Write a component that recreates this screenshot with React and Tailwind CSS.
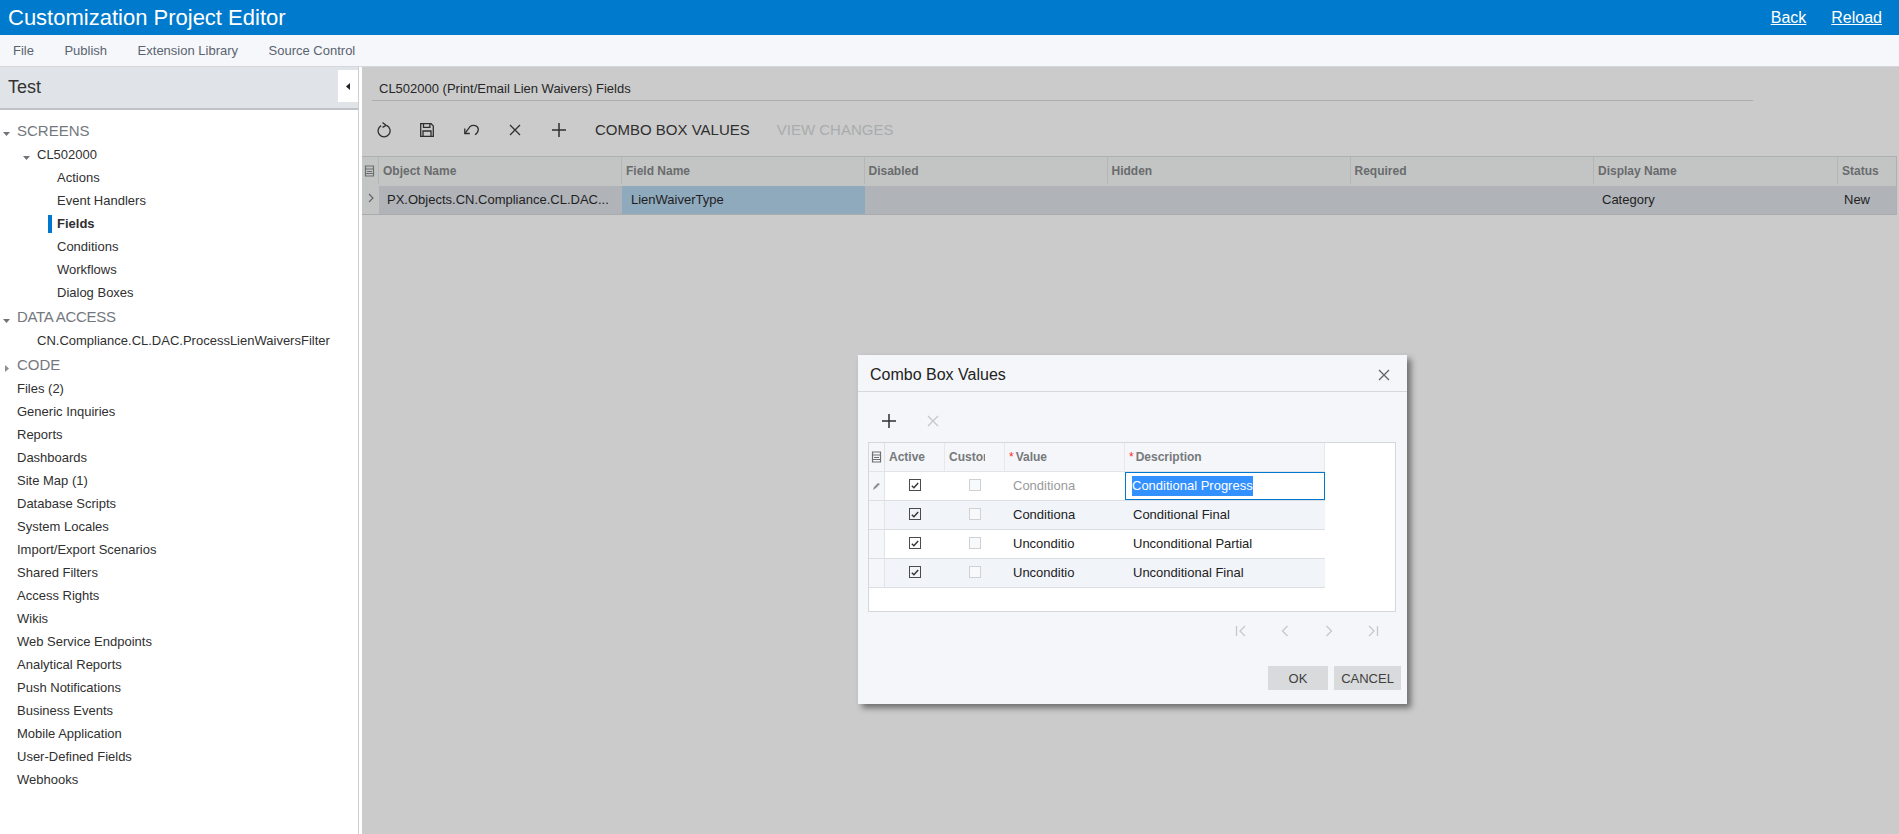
const menu = ["File", "Publish", "Extension Library", "Source Control"];
const screenItems = ["Actions", "Event Handlers", "Fields", "Conditions", "Workflows", "Dialog Boxes"];
const otherItems = [
  "Files (2)", "Generic Inquiries", "Reports", "Dashboards", "Site Map (1)", "Database Scripts",
  "System Locales", "Import/Export Scenarios", "Shared Filters", "Access Rights", "Wikis",
  "Web Service Endpoints", "Analytical Reports", "Push Notifications", "Business Events",
  "Mobile Application", "User-Defined Fields", "Webhooks",
];
const columns = ["Disabled", "Hidden", "Required"];
const comboRows = [
  { value: "Conditiona", text: "Conditional Progress", editing: true },
  { value: "Conditiona", text: "Conditional Final", alt: true },
  { value: "Unconditio", text: "Unconditional Partial" },
  { value: "Unconditio", text: "Unconditional Final", alt: true },
];

function CaretDown() {
  return (
    <svg width="7" height="4" viewBox="0 0 7 4" className="translate-y-[3px] shrink-0">
      <path d="M0 0h7L3.5 4z" fill="#6f747a" />
    </svg>
  );
}

function CaretRight() {
  return (
    <svg width="4" height="7" viewBox="0 0 4 7" className="translate-y-[3px] shrink-0">
      <path d="M0 0l4 3.5L0 7z" fill="#8a8f95" />
    </svg>
  );
}

function ColumnsIcon() {
  return (
    <svg width="11" height="12" viewBox="0 0 11 12" fill="none" stroke="#6c6e70" strokeWidth="1.2">
      <path d="M1.5 1h8v10h-8z" />
      <path d="M1.5 4h8M3 6.5h5M1.5 8.5h8" />
    </svg>
  );
}

function XIcon({ size = 12, color = "#2f2f2f" }) {
  return (
    <svg width={size} height={size} viewBox="0 0 12 12" fill="none" stroke={color} strokeWidth="1.3">
      <path d="M1 1l10 10M11 1L1 11" />
    </svg>
  );
}

function PlusIcon({ color = "#2f2f2f" }) {
  return (
    <svg width="14" height="14" viewBox="0 0 14 14" fill="none" stroke={color} strokeWidth="1.5">
      <path d="M7 0v14M0 7h14" />
    </svg>
  );
}

function Check({ on }) {
  return (
    <div className={`w-[12px] h-[12px] border flex items-center justify-center ${on ? "border-[#4a4a4a]" : "border-[#cfd1d4] bg-[#f8f9fb]"}`}>
      {on && (
        <svg width="8" height="7" viewBox="0 0 8 7" fill="none" stroke="#333" strokeWidth="1.4">
          <path d="M0.8 3.8l2.1 2L7.2 1" />
        </svg>
      )}
    </div>
  );
}

function PagerIcon({ d }) {
  return (
    <div className="w-[44px] flex justify-center">
      <svg width="12" height="12" viewBox="0 0 12 12" fill="none" stroke="#c6c8cb" strokeWidth="1.3">
        <path d={d} />
      </svg>
    </div>
  );
}

function Sidebar() {
  return (
    <aside className="w-[362px] shrink-0 bg-white">
      <div className="w-[358.5px] h-full border-r border-[#cfcfcf]">
        <div className="h-[43px] bg-[#e0e3e8] border-b-2 border-[#bfc2c6] flex items-center justify-between pl-[8px]">
          <span className="text-[18px] text-[#333333]">Test</span>
          <div className="w-[20px] h-[32px] bg-white flex items-center justify-center -mt-[3px]">
            <svg width="4" height="7" viewBox="0 0 4 7"><path d="M4 0L0 3.5 4 7z" fill="#222" /></svg>
          </div>
        </div>
        <div className="pt-[9px] text-[13px] text-[#303030]">
          <div className="h-[24px] flex items-center pl-[3px] gap-[7px] text-[15px] text-[#74787e]">
            <CaretDown />
            <span>SCREENS</span>
          </div>
          <div className="h-[23px] flex items-center pl-[23px] gap-[7px]">
            <CaretDown />
            <span>CL502000</span>
          </div>
          {screenItems.map((item) => (
            <div key={item} className="h-[23px] flex items-center pl-[48px]">
              <div className={`w-[4px] h-[18px] mr-[5px] ${item === "Fields" ? "bg-[#0078cf]" : ""}`} />
              <span className={item === "Fields" ? "font-bold" : ""}>{item}</span>
            </div>
          ))}
          <div className="h-[25px] pt-[2px] flex items-center pl-[3px] gap-[7px] text-[15px] text-[#74787e]">
            <CaretDown />
            <span className="tracking-[-0.3px]">DATA ACCESS</span>
          </div>
          <div className="h-[23px] flex items-center pl-[37px]">CN.Compliance.CL.DAC.ProcessLienWaiversFilter</div>
          <div className="h-[25px] pt-[2px] flex items-center pl-[5px] gap-[8px] text-[15px] text-[#74787e]">
            <CaretRight />
            <span>CODE</span>
          </div>
          {otherItems.map((item) => (
            <div key={item} className="h-[23px] flex items-center pl-[17px]">{item}</div>
          ))}
        </div>
      </div>
    </aside>
  );
}

function Toolbar() {
  return (
    <div className="h-[55px] pt-[3px] flex items-center text-[#2f2f2f]">
      <div className="w-[43px] flex justify-center">
        <svg width="14" height="16" viewBox="0 0 14 16" fill="none" stroke="#2f2f2f" strokeWidth="1.3">
          <path d="M4.2 3.6a6 6 0 1 0 5.4-.2" />
          <path d="M5.5 0.5l3.6 2.9-3.6 2" />
        </svg>
      </div>
      <div className="w-[44px] flex justify-center">
        <svg width="14" height="14" viewBox="0 0 14 14" fill="none" stroke="#2f2f2f" strokeWidth="1.3">
          <path d="M0.7 0.7h10.4l2.2 2.2v10.4H0.7z" />
          <path d="M3.5 0.7v3.6h6.4V0.7M3 13.3V8h8v5.3" />
        </svg>
      </div>
      <div className="w-[44px] flex justify-center">
        <svg width="15" height="12" viewBox="0 0 15 12" fill="none" stroke="#2f2f2f" strokeWidth="1.3">
          <path d="M0.8 4.5v5h5" />
          <path d="M1 9.3L6 2.6C9 0.2 14.4 1.2 14.3 5.6 14.2 7.9 13 9.7 11 10.8" />
        </svg>
      </div>
      <div className="w-[44px] flex justify-center"><XIcon /></div>
      <div className="w-[44px] flex justify-center"><PlusIcon /></div>
      <span className="ml-[14px] text-[15px]">COMBO BOX VALUES</span>
      <span className="ml-[27px] text-[15px] text-[#a9abad]">VIEW CHANGES</span>
    </div>
  );
}

function FieldsGrid() {
  return (
    <div className="w-[1535px] border-t border-r border-[#adafb0]">
      <div className="h-[29px] pb-[2px] flex bg-[#c3c5c4] text-[12px] font-bold text-[#696b6d]">
        <div className="w-[17px] flex items-center pl-[2px] border-r border-[#b4b6b7]"><ColumnsIcon /></div>
        <div className="w-[243px] flex items-center pl-[4px] border-r border-[#b4b6b7]">Object Name</div>
        <div className="w-[243px] flex items-center pl-[4px] border-r border-[#b4b6b7]">Field Name</div>
        {columns.map((c) => (
          <div key={c} className="w-[243px] flex items-center pl-[3.5px] border-r border-[#b4b6b7]">{c}</div>
        ))}
        <div className="w-[244px] flex items-center pl-[4px] border-r border-[#b4b6b7]">Display Name</div>
        <div className="flex-1 flex items-center pl-[4px]">Status</div>
      </div>
      <div className="h-[29px] flex bg-[#b0b3b8] border-b border-[#a9abad] text-[13px] text-[#1f1f1f]">
        <div className="w-[17px] flex items-center justify-center bg-[#c3c5c4]">
          <svg width="6" height="10" viewBox="0 0 6 10" fill="none" stroke="#62666b" strokeWidth="1.2" className="-translate-y-[2px]"><path d="M1 1l4 4-4 4" /></svg>
        </div>
        <div className="w-[243px] flex items-center pl-[8px]">PX.Objects.CN.Compliance.CL.DAC...</div>
        <div className="w-[243px] flex items-center pl-[9px] bg-[#8fa9bd]">LienWaiverType</div>
        <div className="w-[729px]" />
        <div className="w-[244px] flex items-center pl-[8px]">Category</div>
        <div className="flex-1 flex items-center pl-[6px]">New</div>
      </div>
    </div>
  );
}

function ComboDialog() {
  return (
    <div className="absolute left-[858px] top-[355px] w-[549px] h-[349px] bg-[#f4f6f9] shadow-[4px_4px_6px_rgba(0,0,0,0.45)] text-[#222222]">
      <div className="h-[37px] pt-[3px] px-[12px] flex items-center justify-between border-b border-[#d5d7da]">
        <span className="text-[16px]">Combo Box Values</span>
        <div className="mr-[5px]"><XIcon color="#5f6266" /></div>
      </div>
      <div className="h-[50px] flex items-center pl-[24px] gap-[31px] pt-[8px]">
        <PlusIcon />
        <XIcon color="#c4c6c9" />
      </div>
      <div className="ml-[10px] w-[528px] h-[170px] bg-white border border-[#d5d7da]">
        <div className="h-[29px] w-[456px] flex bg-[#f4f6f9] border-b border-[#e2e4e7] text-[12px] font-bold text-[#77797c]">
          <div className="w-[16px] flex items-center justify-center border-r border-[#dfe1e4]"><ColumnsIcon /></div>
          <div className="w-[60px] flex items-center pl-[4px] border-r border-[#e6e8eb]">Active</div>
          <div className="w-[60px] flex items-center pl-[4px] border-r border-[#e6e8eb]">
            <span className="w-[36px] overflow-hidden whitespace-nowrap">Custom</span>
          </div>
          <div className="w-[120px] flex items-center pl-[4px] border-r border-[#e6e8eb]"><span className="text-[#ff2a2a] mr-[2px] font-normal">*</span>Value</div>
          <div className="w-[200px] flex items-center pl-[4px] border-r border-[#e6e8eb]"><span className="text-[#ff2a2a] mr-[2px] font-normal">*</span>Description</div>
        </div>
        {comboRows.map((row) => (
          <div key={row.text} className={`h-[29px] w-[456px] flex border-b border-[#dcdee1] text-[13px] ${row.alt ? "bg-[#f1f4f9]" : "bg-white"}`}>
            <div className="w-[16px] flex items-center justify-center bg-[#f4f6f9] border-r border-[#e2e4e7]">
              {row.editing && (
                <svg width="8" height="8" viewBox="0 0 8 8"><path d="M0 8l1-3L5 1l2 1-4 4z" fill="#8b8d90" /></svg>
              )}
            </div>
            <div className="w-[60px] flex items-center justify-center -translate-y-[1px]"><Check on /></div>
            <div className="w-[60px] flex items-center justify-center -translate-y-[1px]"><Check /></div>
            <div className={`w-[120px] flex items-center pl-[8px] ${row.editing ? "text-[#9a9a9a]" : ""}`}>{row.value}</div>
            {row.editing ? (
              <div className="w-[200px] border-[1.5px] border-[#0078cf] bg-white flex items-center pl-[6px]">
                <span className="bg-[#3390ff] text-white">{row.text}</span>
              </div>
            ) : (
              <div className="w-[200px] flex items-center pl-[8px]">{row.text}</div>
            )}
          </div>
        ))}
      </div>
      <div className="h-[38px] flex items-center justify-end pr-[12px]">
        <PagerIcon d="M1.5 1v10M10 1L5 6l5 5" />
        <PagerIcon d="M8.5 1L3.5 6l5 5" />
        <PagerIcon d="M3.5 1l5 5-5 5" />
        <PagerIcon d="M2 1l5 5-5 5M10.5 1v10" />
      </div>
      <div className="mt-[16px] flex justify-end gap-[6px] pr-[6px] text-[13px] text-[#3f3f3f]">
        <div className="w-[60px] h-[24px] pt-[2px] bg-[#d9dadc] flex items-center justify-center">OK</div>
        <div className="w-[67px] h-[24px] pt-[2px] bg-[#d9dadc] flex items-center justify-center">CANCEL</div>
      </div>
    </div>
  );
}

export default function App() {
  return (
    <div className="relative w-[1899px] h-[834px] overflow-hidden flex flex-col font-['Liberation_Sans',Arial,sans-serif] text-[13px]">
      <header className="h-[35px] shrink-0 bg-[#007acc] text-white flex items-center justify-between pl-[8px] pr-[17px]">
        <span className="text-[22px]">Customization Project Editor</span>
        <div className="flex gap-[25px] text-[16px] underline">
          <span>Back</span>
          <span>Reload</span>
        </div>
      </header>
      <nav className="h-[32px] shrink-0 bg-[#f5f7fa] border-b border-[#d5d7da] flex items-center gap-[30.5px] pl-[13px] text-[13px] text-[#5b6370]">
        {menu.map((m) => (
          <span key={m}>{m}</span>
        ))}
      </nav>
      <div className="flex-1 flex min-h-0">
        <Sidebar />
        <main className="flex-1 bg-[#cbcbcb] text-[#262626]">
          <div className="ml-[10px] w-[1381px] h-[34px] pl-[7px] pb-[2px] flex items-end border-b border-[#adadad]">
            CL502000 (Print/Email Lien Waivers) Fields
          </div>
          <Toolbar />
          <FieldsGrid />
        </main>
      </div>
      <ComboDialog />
    </div>
  );
}
